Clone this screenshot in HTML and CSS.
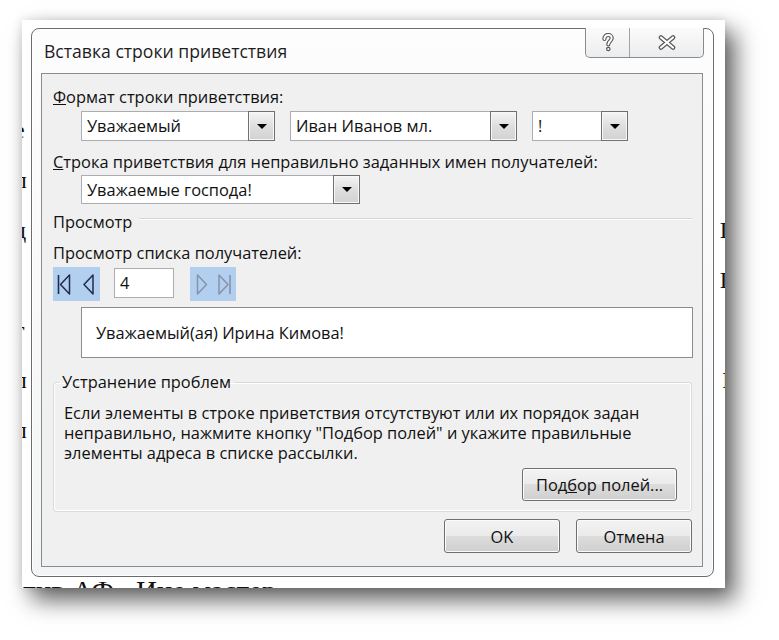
FILE: index.html
```html
<!DOCTYPE html>
<html lang="ru">
<head>
<meta charset="utf-8">
<title>Вставка строки приветствия</title>
<link rel="stylesheet" href="styles.css">
</head>
<body>
<div class="photo">
  <div class="doc">
    <div class="line"><span class="frag-l">е</span><span class="frag-r">с</span></div>
    <div class="line"><span class="frag-l">п</span><span class="frag-r"></span></div>
    <div class="line"><span class="frag-l">д</span><span class="frag-r">П</span></div>
    <div class="line"><span class="frag-l"></span><span class="frag-r">П</span></div>
    <div class="line"><span class="frag-l">т</span><span class="frag-r"></span></div>
    <div class="line"><span class="frag-l">п</span><span class="frag-r">Е</span></div>
    <div class="line"><span class="frag-l">п</span><span class="frag-r"></span></div>
    <div class="bottom-line">тив АФ «Ице мастер»</div>
  </div>

  <div class="dialog">
    <div class="titlebar">
      <div class="title">Вставка строки приветствия</div>
      <div class="caption-btns">
        <div class="cbtn help">
          <svg width="14" height="20" viewBox="0 0 14 20">
            <path d="M3.4 6 C3.4 3.2 5.2 2 7.1 2 C9.2 2 10.7 3.4 10.7 5.3 C10.7 7.8 7.3 8.2 7.3 11.4" fill="none" stroke="#5a5a5a" stroke-width="4.2" stroke-linecap="round"/>
            <path d="M3.4 6 C3.4 3.2 5.2 2 7.1 2 C9.2 2 10.7 3.4 10.7 5.3 C10.7 7.8 7.3 8.2 7.3 11.4" fill="none" stroke="#ffffff" stroke-width="1.9" stroke-linecap="round"/>
            <circle cx="7.3" cy="16" r="2.3" fill="#5a5a5a"/>
            <circle cx="7.3" cy="16" r="1.1" fill="#ffffff"/>
          </svg>
        </div>
        <div class="cbtn close">
          <svg width="20" height="15" viewBox="0 0 20 15">
            <path d="M4 2.5 L16 12.5 M16 2.5 L4 12.5" fill="none" stroke="#5a5a5a" stroke-width="4.6" stroke-linecap="round"/>
            <path d="M4 2.5 L16 12.5 M16 2.5 L4 12.5" fill="none" stroke="#ffffff" stroke-width="2.2" stroke-linecap="round"/>
          </svg>
        </div>
      </div>
    </div>

    <div class="content">
      <div class="label"><u>Ф</u>ормат строки приветствия:</div>
      <div class="combos">
        <div class="combo w1"><span class="val">Уважаемый</span><span class="drop"></span></div>
        <div class="combo w2"><span class="val">Иван Иванов мл.</span><span class="drop"></span></div>
        <div class="combo w3"><span class="val">!</span><span class="drop"></span></div>
      </div>

      <div class="label gap-label"><u>С</u>трока приветствия для неправильно заданных имен получателей:</div>
      <div class="combos single">
        <div class="combo w4"><span class="val">Уважаемые господа!</span><span class="drop"></span></div>
      </div>

      <div class="section"><span class="section-title">Просмотр</span><span class="rule"></span></div>

      <div class="label gap-label">Просмотр списка получателей:</div>
      <div class="nav">
        <div class="navgrp">
          <svg width="47" height="34" viewBox="0 0 47 34">
            <path d="M5.5 8 V27" stroke="#1f2d4d" stroke-width="1.6" fill="none"/>
            <path d="M16.5 8 L7.5 17.5 L16.5 27 Z" stroke="#1f2d4d" stroke-width="1.5" fill="none" stroke-linejoin="round"/>
            <path d="M40 8 L31 17.5 L40 27 Z" stroke="#1f2d4d" stroke-width="1.5" fill="none" stroke-linejoin="round"/>
          </svg>
        </div>
        <div class="recinput">4</div>
        <div class="navgrp off">
          <svg width="46" height="34" viewBox="0 0 46 34">
            <path d="M7.5 8 L16.5 17.5 L7.5 27 Z" stroke="#8592a8" stroke-width="1.5" fill="none" stroke-linejoin="round"/>
            <path d="M29 8 L38 17.5 L29 27 Z" stroke="#8592a8" stroke-width="1.5" fill="none" stroke-linejoin="round"/>
            <path d="M40 8 V27" stroke="#8592a8" stroke-width="1.6" fill="none"/>
          </svg>
        </div>
      </div>

      <div class="preview">Уважаемый(ая) Ирина Кимова!</div>

      <fieldset class="group">
        <legend>Устранение проблем</legend>
        <p class="help-text">Если элементы в строке приветствия отсутствуют или их порядок задан<br>неправильно, нажмите кнопку "Подбор полей" и укажите правильные<br>элементы адреса в списке рассылки.</p>
        <div class="match-row"><button class="btn match">Под<u>б</u>ор полей...</button></div>
      </fieldset>

      <div class="footer">
        <button class="btn">OK</button>
        <button class="btn">Отмена</button>
      </div>
    </div>
  </div>
</div>
</body>
</html>
```
FILE: styles.css
```css
* { box-sizing: border-box; }

body {
  margin: 0;
  background: #ffffff;
  width: 779px;
  height: 640px;
  overflow: hidden;
  font-family: "Open Sans", "Noto Sans", sans-serif;
}

.photo {
  position: relative;
  margin: 20px 0 0 22px;
  width: 703px;
  height: 568px;
  overflow: hidden;
  background: #ffffff;
  box-shadow: 10px 12px 22px rgba(0, 0, 0, 0.62), 0 0 10px rgba(0, 0, 0, 0.12);
}

/* document behind the dialog */
.doc {
  padding-top: 85px;
  font-family: "Liberation Serif", serif;
  font-size: 24px;
  color: #111;
}
.line {
  height: 50px;
  line-height: 50px;
  display: flex;
  justify-content: space-between;
}
.frag-l { margin-left: -8px; }
.frag-r { margin-right: -12px; }
.bottom-line {
  margin-top: 121px;
  font-size: 29px;
  line-height: 30px;
  margin-left: 1px;
  white-space: nowrap;
}

/* dialog window */
.dialog {
  position: absolute;
  left: 9px;
  top: 8px;
  width: 683px;
  height: 549px;
  border: 1px solid #6c6c6c;
  border-radius: 8px;
  background: linear-gradient(#fdfdfd, #f3f4f6);
  box-shadow: inset 0 0 0 1px rgba(255, 255, 255, 0.9);
  padding: 0 10px 9px 9px;
  display: flex;
  flex-direction: column;
}

.titlebar {
  height: 44px;
  display: flex;
  align-items: flex-start;
  flex: none;
}
.title {
  padding: 12px 0 0 3px;
  font-size: 17.6px;
  line-height: 20px;
  color: #1e1e1e;
  white-space: nowrap;
}
.caption-btns {
  margin: -1px -1px 0 auto;
  display: flex;
  height: 30px;
  border: 1px solid #8a8a8a;
  border-top: none;
  border-radius: 0 0 5px 5px;
  background: linear-gradient(#fbfbfb, #ebecee);
  overflow: hidden;
}
.cbtn {
  display: flex;
  align-items: center;
  justify-content: center;
}
.cbtn.help { width: 44px; border-right: 1px solid #a4a4a4; }
.cbtn.close { width: 73px; }

.content {
  flex: 1;
  border: 1px solid #8b8b8b;
  background: #f0f0f0;
  padding: 13px 10px 0 11px;
  display: flex;
  flex-direction: column;
  font-size: 16.4px;
  color: #111;
}

.label {
  height: 20px;
  line-height: 20px;
  white-space: nowrap;
}
.gap-label { margin-top: 11px; }

.combos {
  margin: 4px 0 0 28px;
  display: flex;
  gap: 15px;
}
.combos.single { margin-top: 3px; }

.combo {
  height: 30px;
  background: #ffffff;
  border: 1px solid #abadb3;
  display: flex;
  align-items: center;
  padding-left: 5px;
  white-space: nowrap;
}
.combos.single .combo { height: 29px; }
.w1 { width: 194px; }
.w2 { width: 227px; }
.w3 { width: 96px; }
.w4 { width: 279px; }
.combo .val { flex: 1; line-height: 20px; }
.drop {
  width: 27px;
  height: calc(100% + 2px);
  margin-right: -1px;
  border: 1px solid #707070;
  background: linear-gradient(#f5f5f5, #dedede 50%, #d2d2d2);
  box-shadow: inset 0 0 0 1px #f8f8f8;
  display: flex;
  align-items: center;
  justify-content: center;
}
.drop::after {
  content: "";
  border-left: 5px solid transparent;
  border-right: 5px solid transparent;
  border-top: 5px solid #000;
}

.section {
  margin-top: 8px;
  height: 20px;
  display: flex;
  align-items: flex-start;
}
.section-title { line-height: 20px; }
.rule {
  flex: 1;
  margin: 6px 0 0 7px;
  height: 2px;
  border-top: 1px solid #d5d5d5;
  border-bottom: 1px solid #ffffff;
}

.nav {
  margin-top: 4px;
  height: 34px;
  display: flex;
  align-items: flex-start;
}
.navgrp {
  width: 47px;
  height: 34px;
  background: #b3cff0;
}
.navgrp svg { display: block; }
.navgrp.off { width: 46px; margin-left: 16px; }
.recinput {
  width: 60px;
  height: 30px;
  margin: 1px 0 0 14px;
  background: #ffffff;
  border: 1px solid #abadb3;
  padding-left: 5px;
  line-height: 28px;
}

.preview {
  margin: 6px -1px 0 28px;
  height: 51px;
  background: #ffffff;
  border: 1px solid #8c8c8c;
  display: flex;
  align-items: center;
  padding-left: 14px;
}

.group {
  margin: 14px 0 0 0;
  padding: 11px 14px 10px 10px;
  border: 1px solid #d6dce0;
  border-radius: 3px;
  box-shadow: inset 0 0 0 1px #ffffff;
  min-width: 0;
}
.group legend {
  padding: 0 3px;
  margin-left: -5px;
  line-height: 20px;
  font-size: 16.4px;
}
.help-text {
  margin: 0;
  line-height: 20px;
  white-space: nowrap;
}
.match-row {
  margin-top: 5px;
  display: flex;
  justify-content: flex-end;
}

.btn {
  font: inherit;
  font-size: 16.4px;
  color: #111;
  width: 116px;
  height: 34px;
  padding: 0;
  border: 1px solid #707070;
  border-radius: 3px;
  background: linear-gradient(#f3f3f3 0%, #ebebeb 49%, #dddddd 50%, #cfcfcf 100%);
  box-shadow: inset 0 0 0 1px #fbfbfb;
}
.btn.match { width: 155px; height: 33px; }

.footer {
  margin-top: 7px;
  display: flex;
  justify-content: flex-end;
  gap: 16px;
}
```
